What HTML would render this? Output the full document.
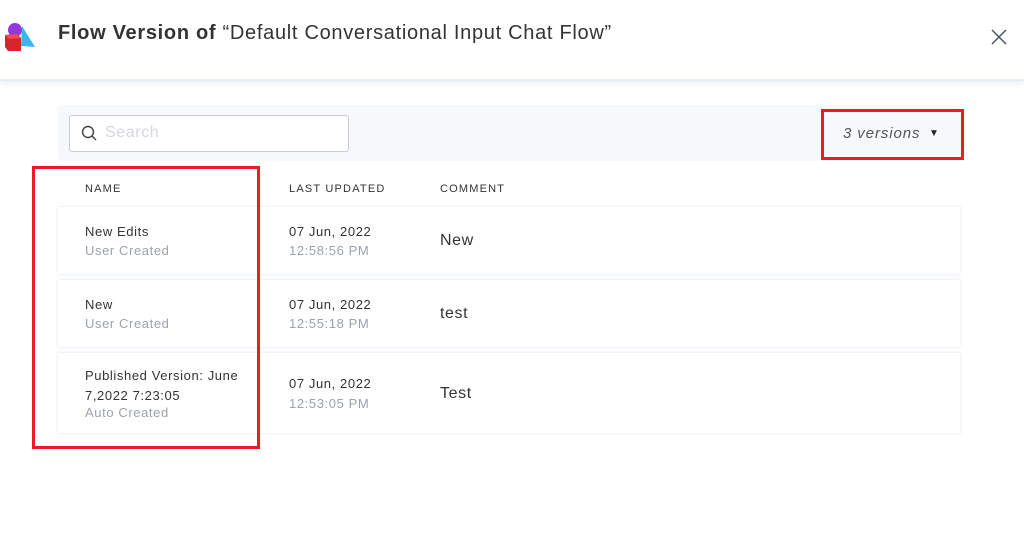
<!DOCTYPE html>
<html><head><style>
*{margin:0;padding:0;box-sizing:border-box}
body{width:1024px;height:542px;background:#fff;font-family:"Liberation Sans",sans-serif;position:relative;overflow:hidden;color:#333;letter-spacing:0.6px}
.a{position:absolute}
.hdr{left:0;top:0;width:1024px;height:81px;border-bottom:2px solid #e6edf4;box-shadow:0 2px 6px rgba(200,210,225,.4)}
.title{left:58px;top:22px;font-size:20px;color:#333;letter-spacing:0.7px}
.bar{left:58px;top:105px;width:903px;height:56px;background:#f6f8fa;border-radius:4px}
.search{left:69px;top:115px;width:280px;height:37px;border:1px solid #c9ccd1;border-radius:3px;background:#fff}
.th{top:183px;font-size:11px;letter-spacing:1.2px;color:#333}
.row{left:58px;width:902px;background:#fff;box-shadow:0 0 3px rgba(200,210,220,.6)}
.t1{font-size:13px;color:#333}
.t2{font-size:13px;color:#9aa3ad}
.cm{font-size:16px;color:#333}
.red{border:3px solid #ea1c24}
</style></head><body>
<div class="a hdr"></div>
<svg class="a" style="left:3px;top:21px" width="32" height="32" viewBox="0 0 32 32">
<polygon points="19,5 32,26 18,25" fill="#3bb5ea"/>
<circle cx="12" cy="9" r="7" fill="#8f3bdc"/>
<polygon points="2,14 14,13 18,17 18,30 5,30 2,26" fill="#d9232f"/>
<polygon points="2,14 14,13 18,17 6,18" fill="#ef4a55"/>
</svg>
<div class="a title"><b>Flow Version of</b> “Default Conversational Input Chat Flow”</div>
<svg class="a" style="left:991px;top:29px" width="16" height="16" viewBox="0 0 16 16"><path d="M1 1L15 15M15 1L1 15" stroke="#4a5568" stroke-width="1.5"/></svg>
<div class="a bar"></div>
<div class="a search"></div>
<svg class="a" style="left:81px;top:125px" width="16" height="16" viewBox="0 0 16 16"><circle cx="7" cy="7" r="5.5" fill="none" stroke="#444" stroke-width="1.4"/><path d="M11 11L15 15" stroke="#444" stroke-width="1.4"/></svg>
<div class="a" style="left:105px;top:124px;font-size:16px;color:#d4d7db">Search</div>
<div class="a red" style="left:821px;top:109px;width:143px;height:51px"></div>
<div class="a" style="left:843px;top:125px;font-size:15px;font-style:italic;color:#555;letter-spacing:0.9px">3 versions</div>
<div class="a" style="left:929px;top:128px;font-size:10px;color:#222">▼</div>
<div class="a th" style="left:85px">NAME</div>
<div class="a th" style="left:289px">LAST UPDATED</div>
<div class="a th" style="left:440px">COMMENT</div>
<div class="a row" style="top:207px;height:67px"></div>
<div class="a row" style="top:280px;height:67px"></div>
<div class="a row" style="top:353px;height:80px"></div>
<div class="a t1" style="left:85px;top:224px">New Edits</div>
<div class="a t2" style="left:85px;top:243px">User Created</div>
<div class="a t1" style="left:289px;top:224px">07 Jun, 2022</div>
<div class="a t2" style="left:289px;top:243px">12:58:56 PM</div>
<div class="a cm" style="left:440px;top:232px">New</div>
<div class="a t1" style="left:85px;top:297px">New</div>
<div class="a t2" style="left:85px;top:316px">User Created</div>
<div class="a t1" style="left:289px;top:297px">07 Jun, 2022</div>
<div class="a t2" style="left:289px;top:316px">12:55:18 PM</div>
<div class="a cm" style="left:440px;top:305px">test</div>
<div class="a t1" style="left:85px;top:366px;line-height:20px">Published Version: June<br>7,2022 7:23:05</div>
<div class="a t2" style="left:85px;top:405px">Auto Created</div>
<div class="a t1" style="left:289px;top:376px">07 Jun, 2022</div>
<div class="a t2" style="left:289px;top:396px">12:53:05 PM</div>
<div class="a cm" style="left:440px;top:385px">Test</div>
<div class="a red" style="left:32px;top:166px;width:228px;height:283px"></div>
</body></html>
